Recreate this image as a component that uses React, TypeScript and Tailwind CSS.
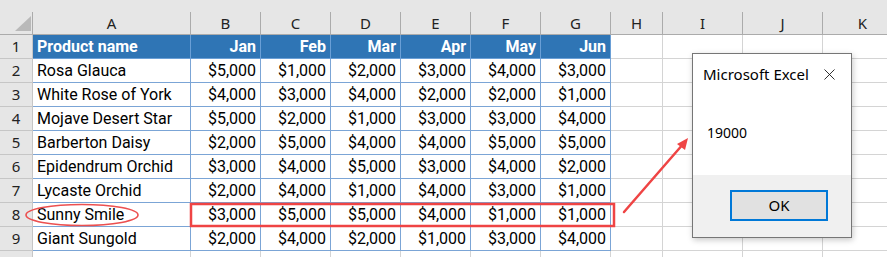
import { X } from "lucide-react";

interface Column {
  key: string;
  width: string;
}

const columns: Column[] = [
  { key: "A", width: "w-[158px]" },
  { key: "B", width: "w-[70px]" },
  { key: "C", width: "w-[70px]" },
  { key: "D", width: "w-[70px]" },
  { key: "E", width: "w-[70px]" },
  { key: "F", width: "w-[70px]" },
  { key: "G", width: "w-[70px]" },
  { key: "H", width: "w-[52px]" },
  { key: "I", width: "w-[80px]" },
  { key: "J", width: "w-[80px]" },
  { key: "K", width: "w-[80px]" },
];

const header = ["Product name", "Jan", "Feb", "Mar", "Apr", "May", "Jun"];

const rows: string[][] = [
  ["Rosa Glauca", "$5,000", "$1,000", "$2,000", "$3,000", "$4,000", "$3,000"],
  ["White Rose of York", "$4,000", "$3,000", "$4,000", "$2,000", "$2,000", "$1,000"],
  ["Mojave Desert Star", "$5,000", "$2,000", "$1,000", "$3,000", "$3,000", "$4,000"],
  ["Barberton Daisy", "$2,000", "$5,000", "$4,000", "$4,000", "$5,000", "$5,000"],
  ["Epidendrum Orchid", "$3,000", "$4,000", "$5,000", "$3,000", "$4,000", "$2,000"],
  ["Lycaste Orchid", "$2,000", "$4,000", "$1,000", "$4,000", "$3,000", "$1,000"],
  ["Sunny Smile", "$3,000", "$5,000", "$5,000", "$4,000", "$1,000", "$1,000"],
  ["Giant Sungold", "$2,000", "$4,000", "$2,000", "$1,000", "$3,000", "$4,000"],
];

const uiFont = "font-['Segoe_UI','Noto_Sans',sans-serif]";
const cellFont = "font-['Roboto','Liberation_Sans',sans-serif]";

function ColumnHeaders() {
  return (
    <div className={`flex h-[23px] bg-[#e6e6e6] text-[15px] text-[#222] ${uiFont}`}>
      {/* select-all corner */}
      <div className="relative w-[33px] shrink-0 border-r border-b border-[#ababab]">
        <svg className="absolute left-[15px] top-[4px]" width="16" height="15">
          <polygon points="16,0 16,15 0,15" fill="#b9b9b9" />
        </svg>
      </div>
      {columns.map((c) => (
        <div
          key={c.key}
          className={`${c.width} shrink-0 flex items-center justify-center border-r border-b border-[#ababab]`}
        >
          {c.key}
        </div>
      ))}
    </div>
  );
}

function RowNumber({ n }: { n?: number }) {
  return (
    <div
      className={`w-[33px] shrink-0 flex items-center justify-center bg-[#e6e6e6] border-r border-b border-[#c6c6c6] text-[15px] text-[#222] ${uiFont}`}
    >
      {n}
    </div>
  );
}

function EmptyCells() {
  return (
    <>
      {columns.slice(7).map((c) => (
        <div key={c.key} className={`${c.width} shrink-0 border-r border-b border-[#d4d4d4] bg-white`} />
      ))}
    </>
  );
}

function HeaderRow() {
  return (
    <div className="flex h-[24px]">
      <RowNumber n={1} />
      {header.map((h, i) => (
        <div
          key={h}
          className={`${columns[i].width} shrink-0 flex items-center bg-[#2f75b5] border-r border-b border-[#6a9fd6] px-[4px] pt-[1px] text-[16px] font-bold text-white ${cellFont} ${
            i === 0 ? "justify-start" : "justify-end"
          }`}
        >
          {h}
        </div>
      ))}
      <EmptyCells />
    </div>
  );
}

function DataRow({ n, cells }: { n: number; cells: string[] }) {
  return (
    <div className="flex h-[24px]">
      <RowNumber n={n} />
      {cells.map((v, i) => (
        <div
          key={i}
          className={`${columns[i].width} shrink-0 flex items-center bg-white border-r border-b border-[#7ba5d6] px-[4px] pt-[1px] text-[16px] text-black ${cellFont} ${
            i === 0 ? "justify-start" : "justify-end"
          }`}
        >
          {v}
        </div>
      ))}
      <EmptyCells />
    </div>
  );
}

// partial row below the table, only its top edge shows
function BlankRow() {
  return (
    <div className="flex h-[24px]">
      <RowNumber />
      {columns.map((c) => (
        <div key={c.key} className={`${c.width} shrink-0 border-r border-b border-[#d4d4d4] bg-white`} />
      ))}
    </div>
  );
}

function MessageBox() {
  return (
    <div
      className={`absolute left-[692px] top-[53px] w-[160px] h-[185px] flex flex-col bg-white border border-[#767676] shadow-[1px_2px_6px_rgba(0,0,0,0.22)] ${uiFont}`}
    >
      <div className="flex items-center justify-between h-[40px] pl-[10px] pr-[12px] text-[15px] text-black">
        <span>Microsoft Excel</span>
        <X size={19} strokeWidth={1.1} className="text-[#111]" />
      </div>
      <div className="flex-1 flex items-center pl-[14px] pb-[5px] text-[14px] text-black">19000</div>
      <div className="h-[62px] flex items-center justify-end bg-[#f0f0f0] pr-[23px] pb-[1px]">
        <button className="w-[98px] h-[31px] flex items-center justify-center bg-[#e1e1e1] border-2 border-[#0078d7] text-[15px] text-black">
          OK
        </button>
      </div>
    </div>
  );
}

function Callouts() {
  return (
    <svg className="absolute left-0 top-0 pointer-events-none" width="887" height="257">
      <ellipse cx="82" cy="215" rx="56" ry="10.5" fill="none" stroke="#ec5050" strokeWidth="1.6" />
      <rect x="191" y="204" width="423" height="22" fill="none" stroke="#ef4444" strokeWidth="2.5" />
      <line x1="624" y1="212" x2="684" y2="143" stroke="#ef4444" strokeWidth="2.5" strokeLinecap="round" />
      <polygon points="688,138 677,144 685,150" fill="#ef4444" />
    </svg>
  );
}

export default function App() {
  return (
    <div className="relative w-[887px] h-[257px] overflow-hidden bg-white">
      <div className="h-[12px] bg-[#e6e6e6]" />
      <ColumnHeaders />
      <HeaderRow />
      {rows.map((r, i) => (
        <DataRow key={i} n={i + 2} cells={r} />
      ))}
      <BlankRow />
      <Callouts />
      <MessageBox />
    </div>
  );
}
